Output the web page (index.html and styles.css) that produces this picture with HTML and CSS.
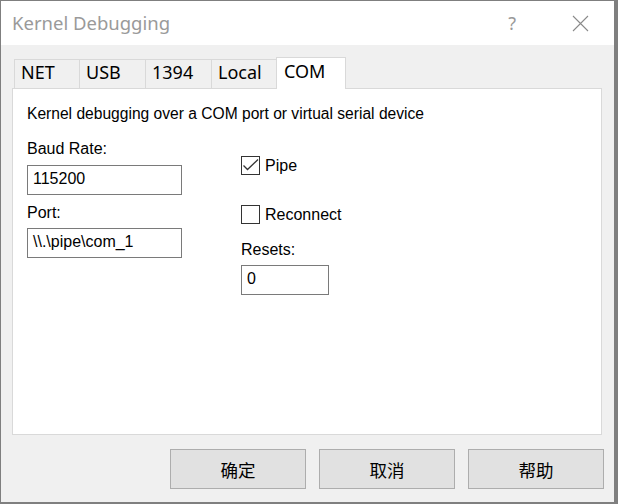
FILE: index.html
```html
<!DOCTYPE html>
<html>
<head>
<meta charset="utf-8">
<link rel="stylesheet" href="styles.css">
</head>
<body>
<div class="window">
  <div class="titlebar">
    <span class="title">Kernel Debugging</span>
    <span class="help">?</span>
    <svg class="close" width="17" height="17" viewBox="0 0 17 17"><path d="M1 1L16 16M16 1L1 16" stroke="#8a8a8a" stroke-width="1.1" fill="none"/></svg>
  </div>
  <div class="content">
    <div class="tabs">
      <div class="tab tab-net">NET</div>
      <div class="tab tab-usb">USB</div>
      <div class="tab tab-1394">1394</div>
      <div class="tab tab-local">Local</div>
      <div class="tab tab-com sel">COM</div>
    </div>
    <div class="panel">
      <p class="desc">Kernel debugging over a COM port or virtual serial device</p>
      <div class="cols">
        <div class="col col-left">
          <div class="label lbl-baud">Baud Rate:</div>
          <div class="input wide">115200</div>
          <div class="label lbl-port">Port:</div>
          <div class="input wide">\\.\pipe\com_1</div>
        </div>
        <div class="col col-right">
          <div class="check chk-pipe">
            <span class="box"><svg width="19" height="19" viewBox="0 0 19 19"><path d="M2.5 9.5L6.5 13.5L17 3.5" stroke="#333" stroke-width="1.3" fill="none"/></svg></span>
            <span class="check-label">Pipe</span>
          </div>
          <div class="check chk-reconnect">
            <span class="box"></span>
            <span class="check-label">Reconnect</span>
          </div>
          <div class="label lbl-resets">Resets:</div>
          <div class="input small">0</div>
        </div>
      </div>
    </div>
    <div class="buttons">
      <div class="btn">确定</div>
      <div class="btn">取消</div>
      <div class="btn">帮助</div>
    </div>
  </div>
</div>
</body>
</html>
```

FILE: styles.css
```css
html, body {
  margin: 0;
  height: 100%;
}
body {
  background: #7f7f7f;
  padding: 1px 0 0 1px;
  box-sizing: border-box;
  overflow: hidden;
}
.window {
  width: 613px;
  height: 501px;
  background: #f0f0f0;
  display: flex;
  flex-direction: column;
}
.titlebar {
  height: 44px;
  background: #fff;
  display: flex;
  align-items: flex-start;
  font-family: "Noto Sans", sans-serif;
  flex: none;
}
.title {
  margin: 10px 0 0 11px;
  font-size: 18.5px;
  line-height: 24px;
  color: #9a9a9a;
  flex: 1;
}
.help {
  margin-top: 10px;
  font-size: 18px;
  line-height: 24px;
  color: #9a9a9a;
}
.close {
  margin: 14px 25px 0 56px;
}
.content {
  padding: 12px 12px 0 11px;
  display: flex;
  flex-direction: column;
}
.tabs {
  display: flex;
  align-items: flex-end;
  height: 31px;
  padding-left: 2px;
}
.tab {
  box-sizing: border-box;
  height: 29px;
  border: 1px solid #d9d9d9;
  border-bottom: none;
  margin-left: -1px;
  padding: 0 0 0 6px;
  font-family: "Noto Sans", sans-serif;
  font-size: 18px;
  line-height: 24px;
  color: #000;
  background: #f0f0f0;
}
.tab-net { margin-left: 0; width: 66px; }
.tab-usb { width: 67px; }
.tab-1394 { width: 67px; }
.tab-local { width: 66px; }
.tab-com { width: 70px; }
.tab.sel {
  height: 32px;
  margin-bottom: -1px;
  background: #fff;
  position: relative;
  z-index: 1;
  padding: 1px 0 0 7px;
}
.panel {
  box-sizing: border-box;
  height: 347px;
  border: 1px solid #d9d9d9;
  background: #fff;
  padding: 16px 14px 0 14px;
  font-family: "Liberation Sans", Arial, sans-serif;
  color: #000;
}
.desc {
  margin: 0;
  font-size: 15.6px;
  line-height: 18px;
}
.cols {
  display: flex;
  gap: 59px;
  margin-top: 17px;
}
.col {
  display: flex;
  flex-direction: column;
  align-items: flex-start;
}
.label {
  font-size: 16px;
  line-height: 18px;
}
.lbl-baud { margin-bottom: 7px; }
.lbl-port { margin: 9px 0 6px; }
.lbl-resets { margin: 17px 0 6px; }
.input {
  box-sizing: border-box;
  height: 30px;
  border: 1px solid #7a7a7a;
  padding: 4px 5px 0;
  font-size: 16px;
  line-height: 18px;
  background: #fff;
}
.input.wide { width: 155px; }
.input.small { width: 88px; }
.check {
  display: flex;
  align-items: center;
  height: 19px;
  font-size: 16px;
  line-height: 19px;
}
.chk-pipe { margin-top: 16px; }
.chk-reconnect { margin-top: 30px; }
.box {
  box-sizing: border-box;
  width: 19px;
  height: 19px;
  border: 1px solid #333;
  position: relative;
  margin-right: 5px;
}
.box svg {
  position: absolute;
  left: -1px;
  top: -1px;
}
.buttons {
  display: flex;
  justify-content: flex-end;
  gap: 13px;
  margin: 14px -2px 0 0;
}
.btn {
  box-sizing: border-box;
  width: 136px;
  height: 40px;
  border: 1px solid #adadad;
  background: #e1e1e1;
  display: flex;
  align-items: center;
  justify-content: center;
  font-family: "Noto Sans CJK SC", sans-serif;
  font-size: 17.5px;
  color: #000;
}
```
